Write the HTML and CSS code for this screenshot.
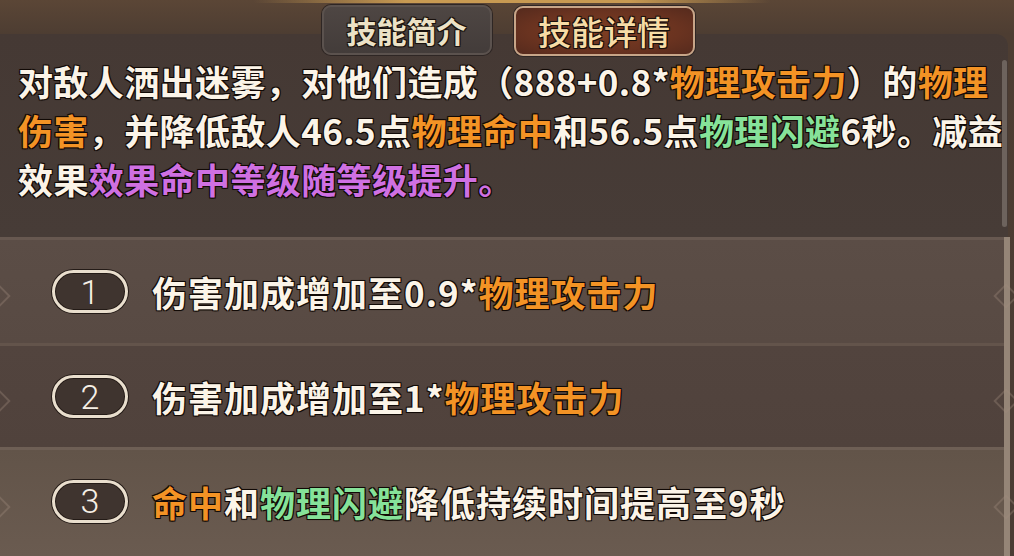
FILE: index.html
```html
<!DOCTYPE html>
<html lang="zh-CN">

<head>
    <meta charset="UTF-8">
    <meta name="viewport" content="width=device-width, initial-scale=1.0">
    <title>技能详情</title>
    <link rel="stylesheet" href="styles.css">
</head>

<body>
    <div class="skill-window">
        <!-- 顶部页签 -->
        <nav class="tab-bar">
            <span class="tab">技能简介</span>
            <span class="tab tab-active">技能详情</span>
        </nav>

        <!-- 技能描述 -->
        <section class="desc-panel">
            <p class="desc">对敌人洒出迷雾，对他们造成（888+0.8*<span class="hl-orange">物理攻击力</span>）的<span class="hl-orange">物理</span><br><span class="hl-orange">伤害</span>，并降低敌人46.5点<span class="hl-orange">物理命中</span>和56.5点<span class="hl-green">物理闪避</span>6秒。减益<br>效果<span class="hl-purple">效果命中等级随等级提升。</span></p>
            <div class="scrollbar"><div class="scroll-thumb"></div></div>
        </section>

        <!-- 升级效果 -->
        <ol class="upgrades">
            <li class="upgrade">
                <span class="level">1</span>
                <span class="effect">伤害加成增加至0.9*<span class="hl-orange">物理攻击力</span></span>
            </li>
            <li class="upgrade upgrade-dark">
                <span class="level">2</span>
                <span class="effect">伤害加成增加至1*<span class="hl-orange">物理攻击力</span></span>
            </li>
            <li class="upgrade upgrade-light">
                <span class="level">3</span>
                <span class="effect"><span class="hl-orange">命中</span>和<span class="hl-green">物理闪避</span>降低持续时间提高至9秒</span>
            </li>
        </ol>
    </div>
</body>

</html>
```

FILE: styles.css
```css
body {
    margin: 0;
    background-color: #4a3c34;
    font-family: "Noto Sans CJK SC", "Noto Sans", sans-serif;
    overflow: hidden;
}

.skill-window {
    display: flex;
    flex-direction: column;
    width: 1014px;
    height: 556px;
    background:
        linear-gradient(90deg, transparent 25%, #c89a52 40%, #c89a52 62%, transparent 76%) top / 100% 3px no-repeat,
        linear-gradient(180deg, #5b4636 0, #4d3d32 34px, #4a3c34 100%);
}

/* 页签 */
.tab-bar {
    display: flex;
    justify-content: center;
    gap: 22px;
    height: 34px;
    padding-left: 2px;
    position: relative;
    z-index: 1;
}

.tab {
    flex: none;
    display: flex;
    align-items: center;
    justify-content: center;
    box-sizing: border-box;
    margin-top: 5px;
    height: 50px;
    width: 170px;
    border-radius: 9px;
    border: 2px solid #5b524e;
    background: linear-gradient(180deg, #4e4643, #433c3a);
    box-shadow: 0 0 0 1px #2e2624;
    color: #ece2c6;
    font-size: 30px;
    font-weight: 700;
    text-shadow: 0 0 2px #1a120e, 1px 1px 0 #1a120e, -1px -1px 0 #1a120e, 1px -1px 0 #1a120e, -1px 1px 0 #1a120e;
}

.tab-active {
    width: 181px;
    margin-top: 6px;
    border-color: #c7a588;
    background: radial-gradient(ellipse at center, #7e3d22 0%, #6a3320 60%, #552a1d 100%);
    color: #f7dca6;
    font-size: 33px;
    font-weight: 500;
}

/* 描述面板 */
.desc-panel {
    display: flex;
    height: 203px;
    margin-right: 6px;
    background: linear-gradient(180deg, #453934, #473c37);
    border-radius: 0 12px 0 0;
    overflow: hidden;
}

.desc {
    flex: 1;
    min-width: 0;
    margin: 0;
    padding: 22px 0 0 18px;
    font-size: 35px;
    line-height: 49px;
    letter-spacing: 0.4px;
    white-space: nowrap;
}

.desc,
.effect {
    color: #fbf4e8;
    font-weight: 700;
    text-shadow: 0 0 2px #120a06, 1px 1px 0 #120a06, -1px -1px 0 #120a06, 1px -1px 0 #120a06, -1px 1px 0 #120a06;
}

.hl-orange {
    color: #f39325;
}

.hl-green {
    color: #86e299;
}

.hl-purple {
    color: #cf70e2;
}

.scrollbar {
    width: 5px;
    margin: 26px 1px 10px 0;
}

.scroll-thumb {
    height: 100%;
    border-radius: 3px;
    background-color: #6d635d;
}

/* 升级列表 */
.upgrades {
    flex: 1;
    display: flex;
    flex-direction: column;
    list-style: none;
    margin: 0 4px 0 0;
    padding: 0;
    border-right: 6px solid #958577;
}

.upgrade {
    position: relative;
    display: flex;
    align-items: center;
    gap: 24px;
    box-sizing: border-box;
    height: 106px;
    padding: 0 0 0 52px;
    border-top: 3px solid #675850;
    background: linear-gradient(180deg, #5b4d46, #584a43);
}

.upgrade-dark {
    height: 104px;
    border-top-color: #63544b;
    background: linear-gradient(180deg, #52443e, #50423c);
}

.upgrade-light {
    flex: 1;
    padding-bottom: 4px;
    border-top-color: #6e5f55;
    background: linear-gradient(180deg, #625449, #6a5b50);
}

/* 左右两侧的菱形装饰 */
.upgrade::before,
.upgrade::after {
    content: "";
    position: absolute;
    top: 50%;
    width: 14px;
    height: 14px;
    margin-top: -5px;
    border: 2px solid rgba(160, 140, 125, 0.35);
    transform: rotate(45deg);
}

.upgrade::before {
    left: -11px;
}

.upgrade::after {
    right: -11px;
}

.level {
    flex: none;
    display: flex;
    align-items: center;
    justify-content: center;
    box-sizing: border-box;
    width: 76px;
    height: 43px;
    border: 3px solid #e9decd;
    border-radius: 22px;
    background-color: #3f342f;
    box-shadow: 0 0 0 1px #241b17, inset 0 0 0 1px #241b17;
    color: #f6f0e6;
    font-family: Roboto, "Liberation Sans", sans-serif;
    font-weight: 300;
    font-size: 34px;
}

.effect {
    font-size: 35px;
    letter-spacing: 1px;
    white-space: nowrap;
}
```
